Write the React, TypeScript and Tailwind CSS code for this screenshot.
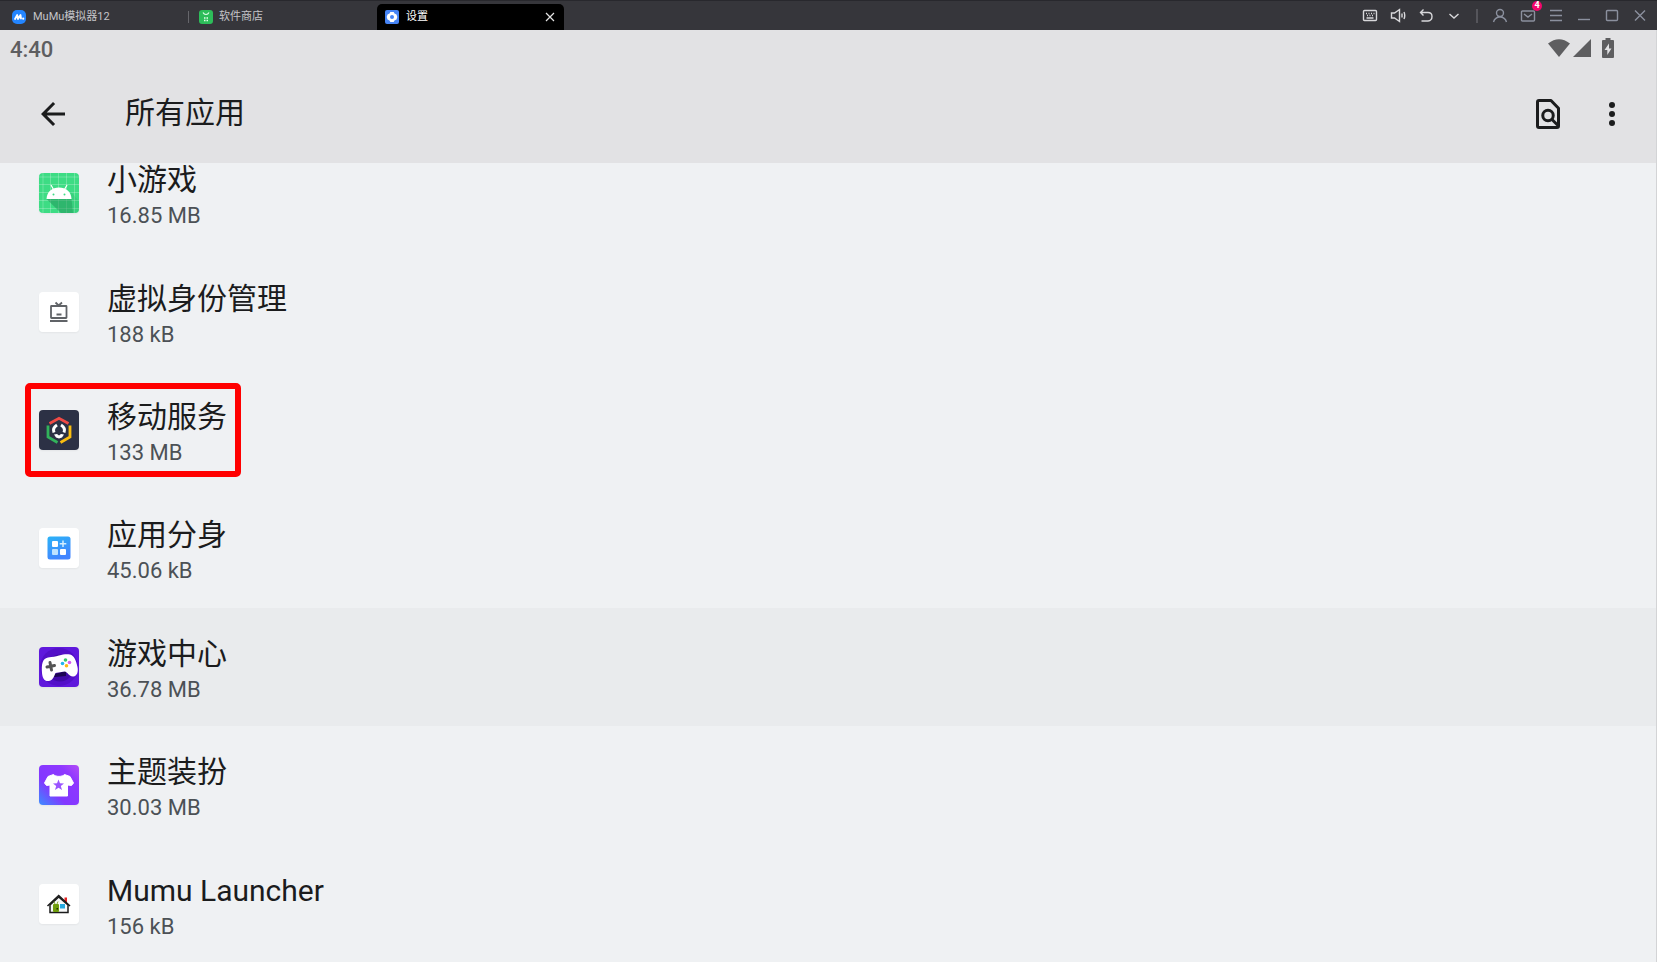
import React from 'react'

const AndroidIcon = () => (
  <svg viewBox="0 0 40 40" className="h-10 w-10">
    <rect width="40" height="40" fill="#3ddc84" />
    <path d="M4 0V40M11.500 0V40M19.500 0V40M27.500 0V40M35.500 0V40M0 4H40M0 11.500H40M0 19.500H40M0 27.500H40M0 35.500H40" stroke="#fff" strokeOpacity=".3" strokeWidth=".8" />
    <path d="M7.500 26 22 40H34L32.500 26Z" fill="#1f8f56" opacity=".5" />
    <path d="M32.500 26 34 40H40V28L31 18Z" fill="#1f8f56" opacity=".15" />
    <path d="M7.500 26C8 18.500 13 14.500 20 14.500S32 18.500 32.500 26Z" fill="#fff" />
    <path d="M14.500 16.500 12 12M25.500 16.500 28 12" stroke="#fff" strokeWidth="1.200" />
    <circle cx="14.500" cy="21.500" r="1" fill="#3ddc84" />
    <circle cx="25.500" cy="21.500" r="1" fill="#3ddc84" />
  </svg>
)

const IdentityIcon = () => (
  <svg viewBox="0 0 40 40" className="h-10 w-10" fill="none" stroke="#606367" strokeWidth="1.800">
    <rect width="40" height="40" fill="#fff" stroke="none" />
    <rect x="12" y="14" width="15.500" height="12" rx=".5" />
    <path d="M16.500 10.500 19.700 13.500 23 10.500M17.500 22.500H22.500M11 29H28.500" />
  </svg>
)

const ServiceIcon = () => (
  <svg viewBox="0 0 40 40" className="h-10 w-10" fill="none" strokeWidth="2.800">
    <rect width="40" height="40" fill="#2c3145" />
    <path d="M10.500 13.500 20 8.300 29.500 13.500" stroke="#f04a45" />
    <path d="M9 15.500V27L18.500 32.500" stroke="#32b35b" />
    <path d="M31 15.500V27L21.500 32.500" stroke="#f9bd10" />
    <path d="M15 22.500C13.800 19.500 14.800 17 18 15M25 22.500C26.200 19.500 25.200 17 22 15" stroke="#fff" strokeWidth="3" />
    <path d="M15 24.500 18 24 20 25.500 22 24 25 24.500 23 27.500 20 28.500 17 27.500Z" fill="#fff" />
  </svg>
)

const CloneIcon = () => (
  <svg viewBox="0 0 40 40" className="h-10 w-10">
    <defs>
      <linearGradient id="clone" x1="0" y1="0" x2=".4" y2="1">
        <stop stopColor="#2bb3f7" />
        <stop offset="1" stopColor="#4285ff" />
      </linearGradient>
    </defs>
    <rect width="40" height="40" fill="#fff" />
    <rect x="8.500" y="8.500" width="23" height="23" rx="2.500" fill="url(#clone)" />
    <rect x="13" y="13" width="6" height="6" rx="1" fill="#fff" />
    <rect x="13" y="21" width="6" height="6" rx="1" fill="#bfe2ff" />
    <rect x="21" y="21" width="6" height="6" rx="1" fill="#fff" />
    <path d="M24 12.500V19M20.700 15.700H27.300" stroke="#d3eeff" strokeWidth="1.500" />
  </svg>
)

const GameIcon = () => (
  <svg viewBox="0 0 40 40" className="h-10 w-10">
    <rect width="40" height="40" fill="#5f18dc" />
    <circle cx="20" cy="20" r="19" fill="#5310c8" />
    <circle cx="21" cy="21" r="13.500" fill="#420ba8" />
    <path d="M12 28 27 24 27 29 16 30Z" fill="#1d0654" />
    <path d="M9 10.500C14 10 16 9.500 20 8.500S27 7 31 7.500C35 8.500 37 13 38.500 20C39.500 25 38 29 34.500 29.500C30 30 29 25 25.500 24.500L16.500 26C15 29 14.500 33 10 34C5 34.500 3.500 31 3 26C2.500 18 3 11.500 9 10.500Z" fill="#fff" />
    <path d="M11 15.500 12.500 23M8 20 15.500 18.500" stroke="#555" strokeWidth="3" strokeLinecap="round" />
    <circle cx="26.500" cy="13" r="1.800" fill="#35c96c" />
    <circle cx="23.500" cy="16.500" r="1.800" fill="#20b5ef" />
    <circle cx="30.500" cy="15.500" r="1.800" fill="#d75cf0" />
    <circle cx="27.500" cy="18.700" r="1.800" fill="#ffb910" />
  </svg>
)

const ThemeIcon = () => (
  <svg viewBox="0 0 40 40" className="h-10 w-10">
    <defs>
      <linearGradient id="theme" x1="0" y1="1" x2="1" y2="0">
        <stop stopColor="#3b8dff" />
        <stop offset=".35" stopColor="#8238ff" />
        <stop offset=".75" stopColor="#8f38ff" />
        <stop offset="1" stopColor="#b34df5" />
      </linearGradient>
    </defs>
    <rect width="40" height="40" fill="url(#theme)" />
    <path d="M14.500 9.500C16.500 12 23.500 12 25.500 9.500L31 11.500 34.500 18 32.500 20.500 28.500 20V31H11V20L7.500 20.500 5.500 18 9 11.500Z" fill="#fff" stroke="#fff" strokeLinejoin="round" />
    <path d="M19.500 14.500 21 18.300 25 18.500 21.800 21 23 25 19.500 22.700 16 25 17.200 21 14 18.500 18 18.300Z" fill="#9b55ff" />
  </svg>
)

const HomeIcon = () => (
  <svg viewBox="0 0 40 40" className="h-10 w-10">
    <rect width="40" height="40" fill="#fff" />
    <rect x="25.500" y="13.500" width="2.500" height="5" fill="#e52222" />
    <path d="M11 21 19.700 13 29 21V28.500H11Z" fill="#f7f8f8" stroke="#1b1b1b" strokeWidth="1.500" />
    <path d="M8.500 22 19.700 11.500 31 22" fill="none" stroke="#1b1b1b" strokeWidth="1.500" />
    <rect x="14" y="20" width="6" height="8" rx="1" fill="#6f9c0d" />
    <path d="M15 17.500 16 20M19 17.500 18 20" stroke="#88aa33" />
    <rect x="17.500" y="24" width="1.500" height="1.500" fill="#203000" />
    <rect x="21" y="20" width="5" height="4.500" fill="#27a9df" />
  </svg>
)

const apps = [
  { id: 1, name: '小游戏', size: '16.85 MB', icon: <AndroidIcon /> },
  { id: 2, name: '虚拟身份管理', size: '188 kB', icon: <IdentityIcon /> },
  { id: 3, name: '移动服务', size: '133 MB', icon: <ServiceIcon />, marked: true },
  { id: 4, name: '应用分身', size: '45.06 kB', icon: <CloneIcon /> },
  { id: 5, name: '游戏中心', size: '36.78 MB', icon: <GameIcon />, hovered: true },
  { id: 6, name: '主题装扮', size: '30.03 MB', icon: <ThemeIcon /> },
  { id: 7, name: 'Mumu Launcher', size: '156 kB', icon: <HomeIcon /> }
]

const lightTools = [
  {
    label: '键盘',
    d: 'M2.500 2.500H13.500Q14.500 2.500 14.500 3.500V11.500Q14.500 12.500 13.500 12.500H2.500Q1.500 12.500 1.500 11.500V3.500Q1.500 2.500 2.500 2.500ZM4 5.500H5M6.500 5.500H7.500M9 5.500H10M11.500 5.500H12.500M5 7.500H6M7.500 7.500H8.500M10 7.500H11M4.500 10H11.500'
  },
  { label: '音量', d: 'M1.500 5V10H4.500L9.500 13.500V1.500L4.500 5ZM12 5.500V9.500M14 4Q15.500 7.500 14 11' },
  { label: '返回', d: 'M5.500 1.500 2.500 4.500 5.500 7.500M2.500 4.500H10Q14 4.500 14 8.500T10 13H3.500' },
  { label: '更多', d: 'M3.500 6 8 10 12.500 6' }
]

const windowTools = [
  { label: '账号', d: 'M8 1.500A3.500 3.500 0 1 1 8 8.500A3.500 3.500 0 1 1 8 1.500M1.500 14Q3 9 8 9T14.500 14' },
  { label: '消息', d: 'M2.500 3H13.500Q14.500 3 14.500 4V12Q14.500 13 13.500 13H2.500Q1.500 13 1.500 12V4Q1.500 3 2.500 3ZM4 6 8 9 12 6', badge: 4 },
  { label: '菜单', d: 'M2 2.500H14M2 7.500H14M2 12.500H14' },
  { label: '最小化', d: 'M2 11.500H14' },
  { label: '最大化', d: 'M3.500 2.500H12.500Q13.500 2.500 13.500 3.500V11.500Q13.500 12.500 12.500 12.500H3.500Q2.500 12.500 2.500 11.500V3.500Q2.500 2.500 3.500 2.500Z' },
  { label: '关闭', d: 'M3 2.500 13 12.500M13 2.500 3 12.500' }
]

const TitleBar: React.FC = () => (
  <div className="flex h-[30px] shrink-0 items-stretch border-t border-[#28282d] bg-[#36363b] text-[11px] text-[#c4c4c8]">
    <button className="flex w-[188px] items-center gap-[7px] pt-[3px] pl-3">
      <svg viewBox="0 0 14 14" className="h-[14px] w-[14px]">
        <rect width="14" height="14" rx="5" fill="#2385ff" />
        <path d="M3 9 5.200 5 6 9 8.500 5 9 8.500" fill="none" stroke="#fff" strokeWidth="1.800" strokeLinecap="round" strokeLinejoin="round" />
        <circle cx="11.200" cy="8.700" r="1.100" fill="#fff" />
      </svg>
      <span className="pt-px">MuMu模拟器12</span>
    </button>
    <div className="mt-[10px] h-3 w-px bg-[#66666b]" />
    <button className="flex w-[188px] items-center gap-[6px] pt-[3px] pl-[10px]">
      <svg viewBox="0 0 14 14" className="h-[14px] w-[14px]">
        <rect width="14" height="14" rx="3" fill="#2dbd5a" />
        <path d="M4 2.500Q5 4.500 7 4.500T10 2.500" fill="none" stroke="#e6ffed" strokeWidth="1.100" />
        <path d="M5 7.300H6.500V8.800H5ZM7.500 7.300H9V8.800H7.500ZM5 9.700H6.500V11.200H5ZM7.500 9.700H9V11.200H7.500Z" fill="#e6ffed" />
      </svg>
      <span className="pt-px">软件商店</span>
    </button>
    <div className="mt-[3px] flex w-[187px] items-center rounded-t-[5px] bg-black pr-[7px] pl-2 text-white">
      <button className="flex flex-1 items-center gap-[7px]">
        <svg viewBox="0 0 14 14" className="h-[14px] w-[14px]">
          <rect width="14" height="14" rx="2" fill="#4684f5" />
          <path d="M5.300 2H8.700L9.500 3.500 11.500 4.500 12.300 7 11.500 9.500 9.500 10.500 8.700 12H5.300L4.500 10.500 2.500 9.500 1.700 7 2.500 4.500 4.500 3.500Z" fill="#fff" />
          <circle cx="7" cy="7" r="2" fill="#4684f5" />
        </svg>
        <span className="pt-px">设置</span>
      </button>
      <button aria-label="关闭标签" className="p-[2px]">
        <svg viewBox="0 0 10 10" className="h-[10px] w-[10px]" stroke="#e4e4e4" strokeWidth="1.200">
          <path d="M1 1 9 9M9 1 1 9" />
        </svg>
      </button>
    </div>

    <div className="ml-auto flex items-center pr-[3px]">
      {lightTools.map((tool) => (
        <button key={tool.label} aria-label={tool.label} className="flex w-7 justify-center text-[#d8d8db]">
          <svg viewBox="0 0 16 16" className="h-4 w-4" fill="none" stroke="currentColor" strokeWidth="1.400">
            <path d={tool.d} />
          </svg>
        </button>
      ))}
      <div className="mx-2 h-[14px] w-[2px] bg-[#55555b]" />
      {windowTools.map((tool) => (
        <button key={tool.label} aria-label={tool.label} className="relative flex w-7 justify-center text-[#8b909e]">
          <svg viewBox="0 0 16 16" className="h-4 w-4" fill="none" stroke="currentColor" strokeWidth="1.400">
            <path d={tool.d} />
          </svg>
          {tool.badge && (
            <span className="absolute -top-[7px] right-0 flex h-[10px] w-[10px] items-center justify-center rounded-full bg-[#f5066c] text-[9px] font-bold text-white">
              {tool.badge}
            </span>
          )}
        </button>
      ))}
    </div>
  </div>
)

const StatusBar: React.FC = () => (
  <div className="flex h-[35px] items-center justify-between pr-[42px] pl-[10px] text-[#5e5e60]">
    <span className="pt-1 text-[22px] leading-8 font-medium">4:40</span>
    <div className="flex items-center">
      <svg viewBox="0 0 22 18" className="h-[18px] w-[22px]" fill="currentColor">
        <path d="M0 4.500Q11-4 22 4.500L11 18Z" />
      </svg>
      <svg viewBox="0 0 18 18" className="ml-[3px] h-[18px] w-[18px]" fill="currentColor">
        <path d="M18 0V18H0Z" />
      </svg>
      <svg viewBox="0 0 12 20" className="ml-[11px] h-5 w-3" fill="currentColor" fillRule="evenodd">
        <path d="M3.500 0H8.500V2H11Q12 2 12 3V19Q12 20 11 20H1Q0 20 0 19V3Q0 2 1 2H3.500ZM7 5.500 2.500 12H5.300V17L9.500 10.500H7Z" />
      </svg>
    </div>
  </div>
)

const App: React.FC = () => {
  return (
    <div className="flex h-screen flex-col overflow-hidden bg-[#eff1f3] font-[Roboto,'Noto_Sans_CJK_SC',sans-serif] text-[#1b1c1d]">
      <TitleBar />

      <div className="flex flex-1 flex-col border-r border-[#d3d4d6]">
        <header className="z-10 shrink-0 bg-[#e2e2e4]">
          <StatusBar />
          <div className="flex h-[98px] items-center pr-[26px] pl-[35px]">
            <button aria-label="返回上一页">
              <svg viewBox="0 0 24 24" className="h-9 w-9" fill="currentColor">
                <path d="M20 11H7.830l5.590-5.590L12 4l-8 8 8 8 1.410-1.410L7.830 13H20v-2z" />
              </svg>
            </button>
            <h1 className="ml-[54px] pb-[2px] text-[30px] leading-9">所有应用</h1>
            <button aria-label="搜索应用" className="ml-auto">
              <svg viewBox="0 0 24 24" className="h-9 w-9" fill="none" stroke="currentColor" strokeWidth="2" strokeLinejoin="round">
                <path d="M6 3H14L19 8.200V20Q19 21 18 21H6Q5 21 5 20V4Q5 3 6 3Z" />
                <circle cx="12" cy="13" r="3.500" />
                <path d="M14.500 15.500 19 20" />
              </svg>
            </button>
            <button aria-label="更多选项" className="ml-7">
              <svg viewBox="0 0 24 24" className="h-9 w-9" fill="currentColor">
                <circle cx="12" cy="6" r="2" />
                <circle cx="12" cy="12" r="2" />
                <circle cx="12" cy="18" r="2" />
              </svg>
            </button>
          </div>
        </header>

        {/* App list, scrolled slightly under the header */}
        <ul className="-mt-[29px] -mb-px flex flex-1 flex-col">
          {apps.map((app) => (
            <li
              key={app.id}
              className={`relative flex flex-1 items-center gap-7 pl-[39px] ${app.hovered ? 'bg-[#e9ebed]' : ''}`}
            >
              <div className="overflow-hidden rounded-[4px] shadow-xs">{app.icon}</div>
              <div className="pt-2">
                <h2 className="text-[30px] leading-9">{app.name}</h2>
                <p className="mt-[2px] text-[22px] leading-8 text-[#4c5156]">{app.size}</p>
              </div>
              {app.marked && (
                <div className="absolute top-3 left-[25px] h-[94px] w-[216px] rounded-[5px] border-6 border-[#ff0000]" />
              )}
            </li>
          ))}
        </ul>
      </div>
    </div>
  )
}

export default App
